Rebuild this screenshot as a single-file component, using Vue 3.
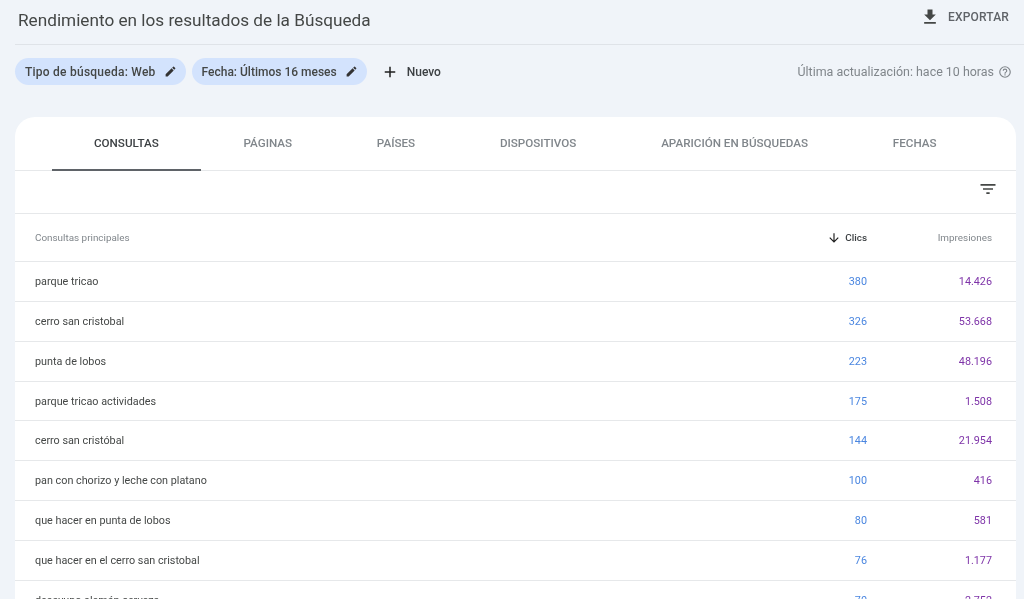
<script setup>
const tabs = ['CONSULTAS', 'PÁGINAS', 'PAÍSES', 'DISPOSITIVOS', 'APARICIÓN EN BÚSQUEDAS', 'FECHAS']
const rows = [
  ['parque tricao', '380', '14.426'],
  ['cerro san cristobal', '326', '53.668'],
  ['punta de lobos', '223', '48.196'],
  ['parque tricao actividades', '175', '1.508'],
  ['cerro san cristóbal', '144', '21.954'],
  ['pan con chorizo y leche con platano', '100', '416'],
  ['que hacer en punta de lobos', '80', '581'],
  ['que hacer en el cerro san cristobal', '76', '1.177'],
  ['desayuno alemán cerveza', '70', '2.752'],
]
const chips = ['Tipo de búsqueda: Web', 'Fecha: Últimos 16 meses']
</script>

<template>
  <div class="page">
    <header class="top">
      <h1 class="title">Rendimiento en los resultados de la Búsqueda</h1>
      <div class="export">
        <svg class="export-icon" viewBox="0 0 24 24" width="24" height="24">
          <path fill="#444746" d="M19 9h-4V3H9v6H5l7 7 7-7zM5 18v2h14v-2H5z" />
        </svg>
        <span>EXPORTAR</span>
      </div>
    </header>

    <div class="filters">
      <div class="chip" v-for="c in chips" :key="c">
        <span>{{ c }}</span>
        <svg viewBox="0 0 24 24" width="13" height="13">
          <path fill="#333" d="M3 17.25V21h3.75L17.81 9.94l-3.75-3.75L3 17.25zM20.71 7.04a1 1 0 0 0 0-1.41l-2.34-2.34a1 1 0 0 0-1.41 0l-1.83 1.83 3.75 3.75 1.83-1.83z" />
        </svg>
      </div>
      <div class="new">
        <svg viewBox="0 0 24 24" width="18" height="18">
          <path fill="#1f1f1f" d="M19 13h-6v6h-2v-6H5v-2h6V5h2v6h6v2z" />
        </svg>
        <span>Nuevo</span>
      </div>
      <div class="updated">
        <span>Última actualización: hace 10 horas</span>
        <svg viewBox="0 0 24 24" width="14" height="14">
          <path fill="#80868b" d="M11 18h2v-2h-2v2zm1-16a10 10 0 1 0 0 20 10 10 0 0 0 0-20zm0 18a8 8 0 1 1 0-16 8 8 0 0 1 0 16zm0-14a4 4 0 0 0-4 4h2a2 2 0 1 1 4 0c0 2-3 1.75-3 5h2c0-2.25 3-2.5 3-5a4 4 0 0 0-4-4z" />
        </svg>
      </div>
    </div>

    <main class="card">
      <nav class="tabs">
        <div class="tab" :class="{ active: i === 0 }" v-for="(t, i) in tabs" :key="t">{{ t }}</div>
      </nav>
      <div class="toolbar">
        <svg viewBox="0 0 24 24" width="24" height="24">
          <path fill="#444746" d="M10 18h4v-2h-4v2zM3 6v2h18V6H3zm3 7h12v-2H6v2z" />
        </svg>
      </div>
      <div class="row head">
        <div class="cell-name">Consultas principales</div>
        <div class="cell-clicks sorted">
          <svg viewBox="0 0 24 24" width="14" height="14">
            <path fill="#1f1f1f" d="M20 12l-1.41-1.41L13 16.17V4h-2v12.17l-5.58-5.59L4 12l8 8 8-8z" />
          </svg>
          <span>Clics</span>
        </div>
        <div class="cell-impr">Impresiones</div>
      </div>
      <div class="row" v-for="r in rows" :key="r[0]">
        <div class="cell-name">{{ r[0] }}</div>
        <div class="cell-clicks blue">{{ r[1] }}</div>
        <div class="cell-impr purple">{{ r[2] }}</div>
      </div>
    </main>
  </div>
</template>

<style>
html, body { margin: 0; background: #f0f4f9; overflow: hidden; }
</style>

<style scoped>
.page {
  width: 1024px;
  height: 599px;
  overflow: hidden;
  background: #f0f4f9;
  font-family: Roboto, "Liberation Sans", sans-serif;
  box-sizing: border-box;
  padding-left: 15px;
  filter: blur(0.3px);
}
.top {
  display: flex;
  align-items: center;
  justify-content: space-between;
  border-bottom: 1px solid #dfe3e8;
  padding: 0 15px 5px 3px;
  height: 39px;
}
.title {
  margin: 0;
  font-size: 17.2px;
  font-weight: 400;
  color: #444746;
}
.export {
  display: flex;
  align-items: center;
  gap: 8px;
  font-size: 12px;
  font-weight: 500;
  color: #5f6368;
  letter-spacing: 0.15px;
  margin-top: -5px;
}
.export-icon { width: 20px; height: 20px; }
.filters {
  display: flex;
  align-items: center;
  height: 27px;
  margin-top: 13px;
  padding-right: 12px;
}
.chip {
  display: flex;
  align-items: center;
  height: 27px;
  padding: 0 9px 0 10px;
  gap: 8px;
  margin-right: 7px;
  border-radius: 14px;
  background: #d3e3fd;
  font-size: 12px;
  font-weight: 500;
  color: #444746;
}
.chip:nth-child(1) { letter-spacing: 0.24px; }
.chip:nth-child(2) { letter-spacing: 0; margin-left: -1px; }
.new {
  display: flex;
  align-items: center;
  gap: 8px;
  margin-left: 7px;
  font-size: 12px;
  font-weight: 500;
  color: #3c4043;
}
.updated {
  margin-left: auto;
  display: flex;
  align-items: center;
  gap: 4px;
  font-size: 12.45px;
  color: #80868b;
}
.card {
  margin-top: 32px;
  width: 1001px;
  background: #fff;
  border-radius: 20px 20px 0 0;
}
.tabs {
  display: flex;
  height: 53px;
  padding-left: 36.6px;
  border-bottom: 1px solid #e6e8ea;
}
.tab {
  padding: 0 42.4px;
  display: flex;
  align-items: center;
  font-size: 11.65px;
  font-weight: 500;
  color: #80868b;
  box-sizing: border-box;
  border-bottom: 2px solid transparent;
  margin-bottom: -1px;
}
.tab.active {
  color: #3c4043;
  border-bottom-color: #5f6368;
}
.toolbar {
  height: 42px;
  display: flex;
  align-items: center;
  justify-content: flex-end;
  padding-right: 18px;
  border-bottom: 1px solid #e6e8ea;
}
.toolbar svg { width: 20px; height: 20px; margin-top: -6px; }
.row {
  display: flex;
  align-items: center;
  height: 38.86px;
  padding: 0 24px 0 20px;
  border-bottom: 1px solid #e6e8ea;
  font-size: 10.8px;
  color: #444746;
}
.head {
  height: 47px;
  font-size: 9.9px;
  color: #80868b;
}
.cell-name { flex: 1; }
.cell-clicks {
  width: 120px;
  text-align: right;
  display: flex;
  align-items: center;
  justify-content: flex-end;
  gap: 4px;
}
.cell-impr { width: 125px; text-align: right; }
.sorted { color: #3c4043; font-weight: 500; }
.blue { color: #4a86e0; }
.purple { color: #7e33a8; }
</style>
